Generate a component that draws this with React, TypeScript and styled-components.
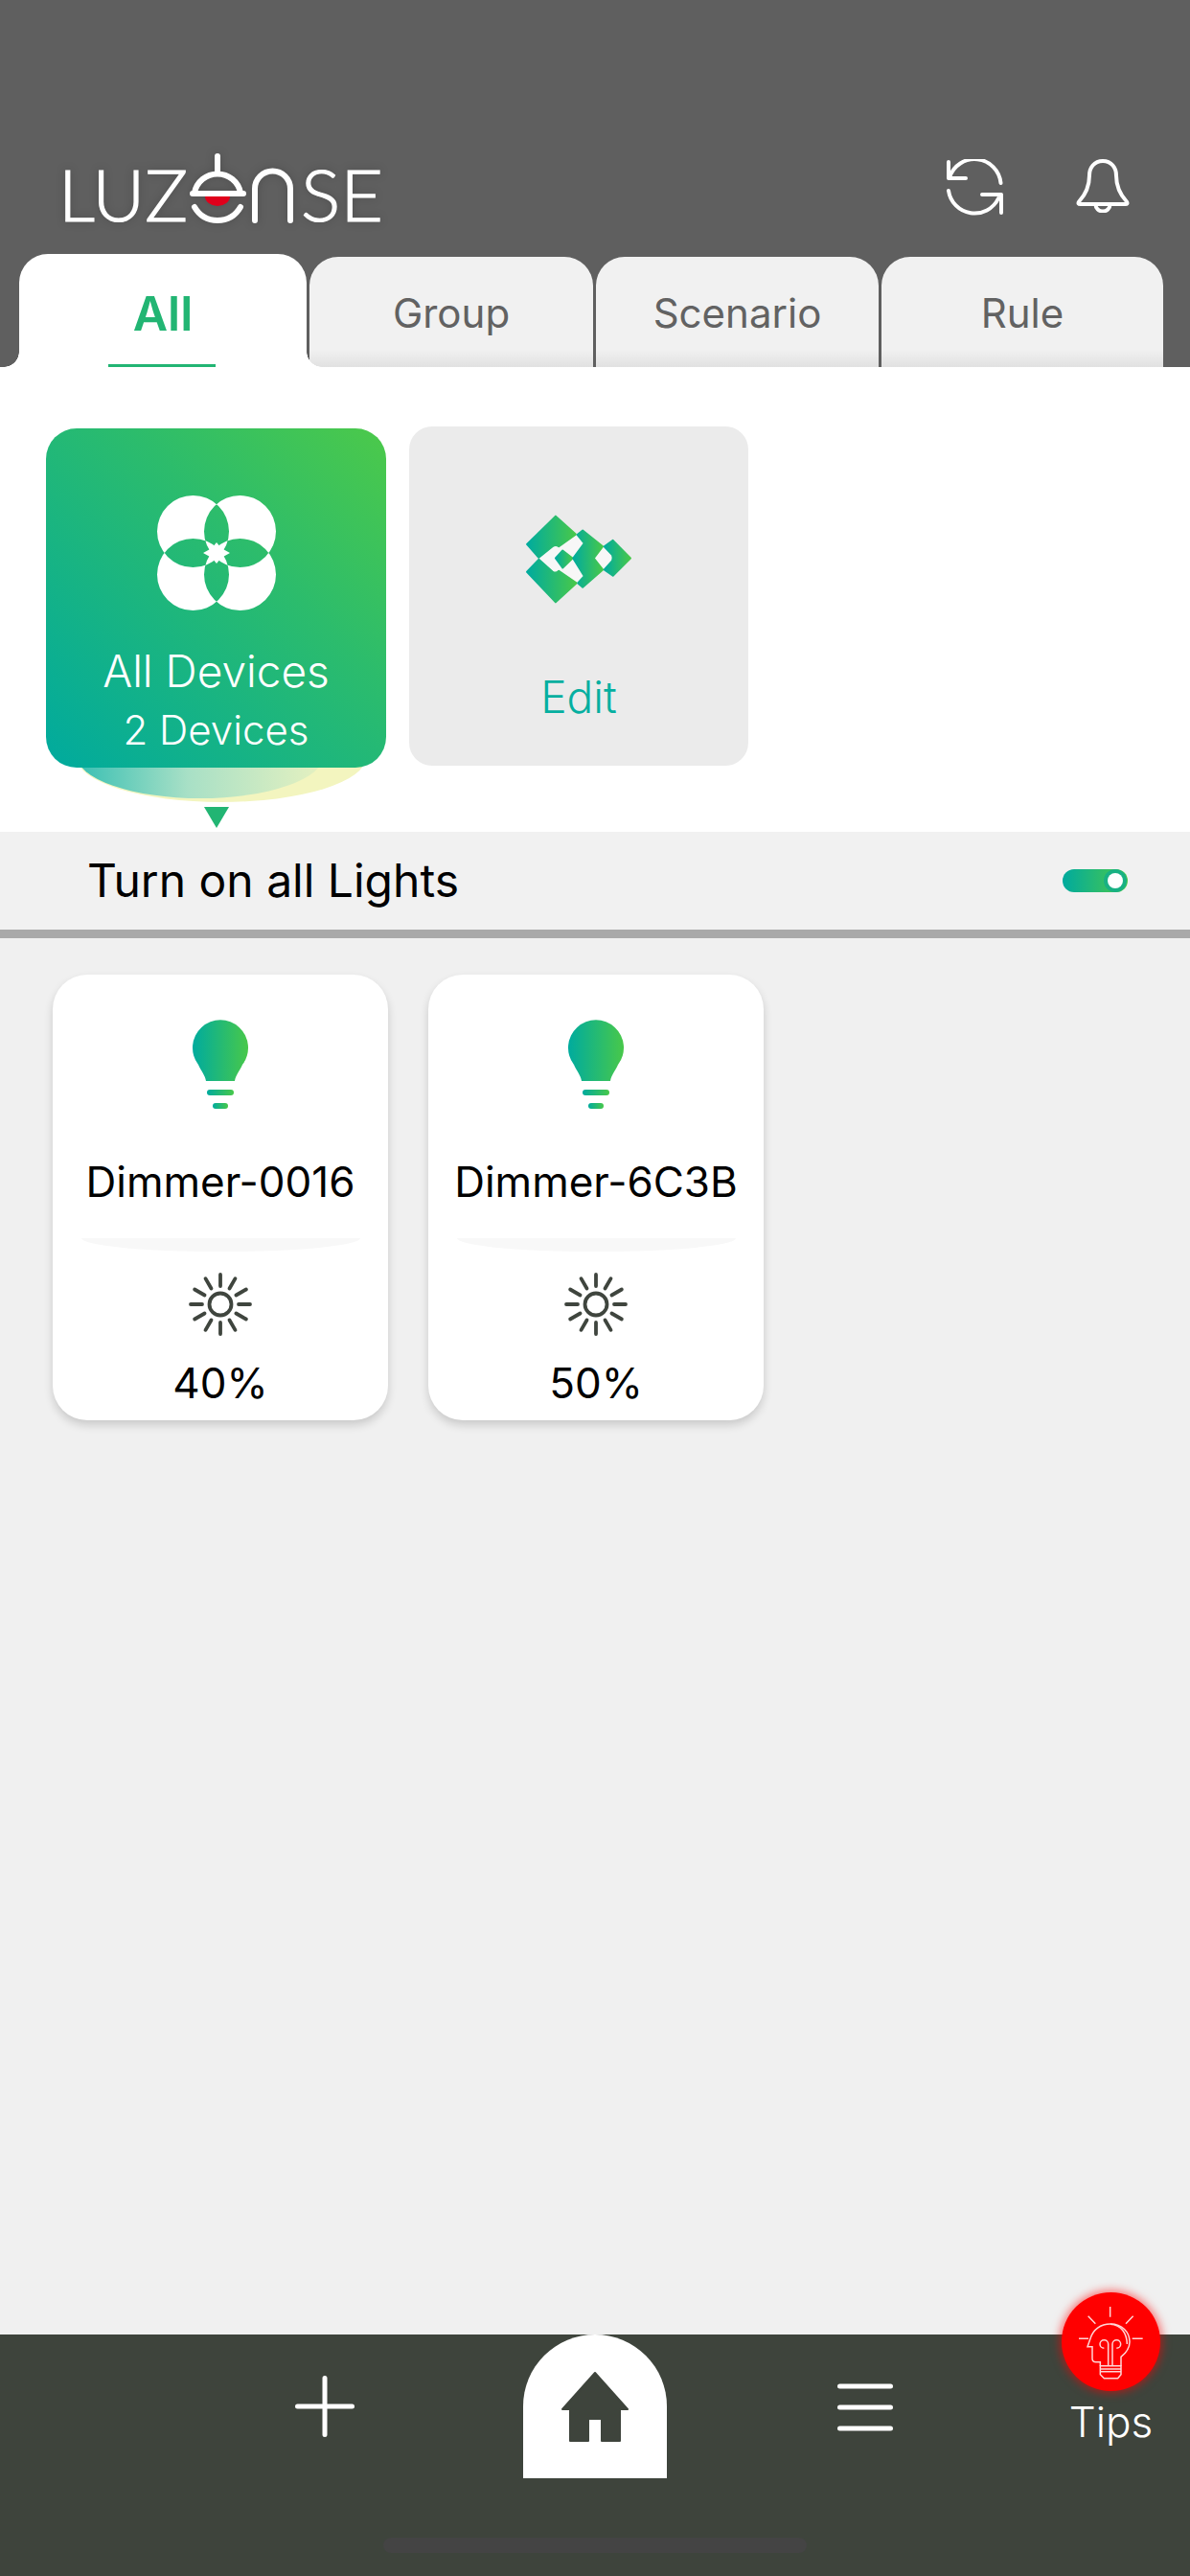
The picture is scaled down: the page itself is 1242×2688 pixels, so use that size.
import React from "react";
import styled, { createGlobalStyle } from "styled-components";

const Global = createGlobalStyle`
  html, body { margin: 0; padding: 0; background: #f0f0f0; }
  body { font-family: Inter, "Noto Sans", "Liberation Sans", sans-serif; }
  * { box-sizing: border-box; }
`;

const Page = styled.div`
  width: 1242px;
  height: 2688px;
  display: flex;
  flex-direction: column;
  background: #f0f0f0;
  overflow: hidden;
`;

const Header = styled.header`
  height: 383px;
  background: #5f5f5f;
  display: flex;
  flex-direction: column;
  justify-content: flex-end;
`;

const TopBar = styled.div`
  display: flex;
  align-items: flex-start;
  justify-content: space-between;
  padding: 0 63px 31px 61px;
`;

const LogoMark = styled.svg`
  display: block;
  width: 340px;
  height: 74px;
  filter: drop-shadow(0 0 5px rgba(0, 0, 0, 0.18));
`;

const LogoText = styled.text`
  font-family: Lato, Inter, sans-serif;
  font-weight: 300;
  font-size: 74px;
  fill: #fff;
  stroke: #fff;
  stroke-width: 1.2px;
`;

const Actions = styled.div`
  display: flex;
  align-items: flex-start;
  gap: 75px;
  margin-top: 6px;
`;

const TabRow = styled.nav`
  display: grid;
  grid-template-columns: 300px 296px 295px 294px;
  column-gap: 3px;
  padding-left: 20px;
  align-items: end;
`;

const Tab = styled.div<{ $active?: boolean }>`
  position: relative;
  height: ${(p) => (p.$active ? 118 : 115)}px;
  border-radius: 30px 30px 0 0;
  padding-top: ${(p) => (p.$active ? 32 : 34)}px;
  text-align: center;
  font-size: ${(p) => (p.$active ? 50 : 42)}px;
  line-height: ${(p) => (p.$active ? 60 : 50)}px;
  font-weight: ${(p) => (p.$active ? 600 : 400)};
  color: ${(p) => (p.$active ? "#22b573" : "#626262")};
  background: ${(p) =>
    p.$active ? "#fff" : "linear-gradient(#f1f1f1 0 84%, #e1e1e1 100%)"};
  ${(p) =>
    p.$active &&
    `
    z-index: 1;
    &::before, &::after {
      content: "";
      position: absolute;
      bottom: 0;
      width: 16px;
      height: 16px;
    }
    &::before {
      left: -16px;
      background: radial-gradient(circle at 0 0, transparent 15.5px, #fff 16px);
    }
    &::after {
      right: -16px;
      background: radial-gradient(circle at 100% 0, transparent 15.5px, #fff 16px);
    }
  `}
`;

const TabUnderline = styled.span`
  position: absolute;
  left: 93px;
  bottom: 0;
  width: 112px;
  height: 3px;
  background: #22b573;
`;

const Panel = styled.section`
  height: 485px;
  background: #fff;
  padding: 64px 0 0 48px;
  display: flex;
  align-items: flex-start;
  gap: 24px;
`;

const TileWrap = styled.div`
  position: relative;
  width: 355px;
  height: 354px;
`;

const GlowBack = styled.div`
  position: absolute;
  left: 32px;
  top: 296px;
  width: 302px;
  height: 94px;
  border-radius: 50%;
  background: #f3f5bf;
  &::before {
    content: "";
    position: absolute;
    left: 0;
    top: 0;
    width: 258px;
    height: 90px;
    border-radius: 50%;
    background: linear-gradient(90deg, #38bfb3 0%, #a8e0c6 45%, #e6f1c0 100%);
  }
`;

const Pointer = styled.div`
  position: absolute;
  left: 165px;
  top: 395px;
  width: 0;
  height: 0;
  border-left: 13px solid transparent;
  border-right: 13px solid transparent;
  border-top: 22px solid #22b573;
`;

const ActiveTile = styled.div`
  position: relative;
  height: 354px;
  border-radius: 32px;
  background: linear-gradient(45deg, #00aa9e 0%, #2cbc6c 62%, #4cc94a 100%);
  color: #fff;
  padding-top: 70px;
  display: flex;
  flex-direction: column;
  align-items: center;
`;

const TileTitle = styled.div`
  margin-top: 33px;
  font-size: 46px;
  line-height: 60px;
  font-weight: 300;
`;

const TileSub = styled.div`
  margin-top: 2px;
  font-size: 42px;
  line-height: 60px;
  font-weight: 300;
`;

const EditTile = styled.div`
  width: 354px;
  height: 354px;
  margin-top: -2px;
  border-radius: 24px;
  background: #ebebeb;
  padding-top: 92px;
  display: flex;
  flex-direction: column;
  align-items: center;
`;

const EditLabel = styled.div`
  margin-top: 67px;
  font-size: 46px;
  line-height: 60px;
  font-weight: 300;
  color: #05afa0;
`;

const LightsRow = styled.div`
  height: 111px;
  background: #f1f1f1;
  border-bottom: 9px solid #a9a9a9;
  padding: 0 65px 0 91px;
  display: flex;
  align-items: center;
  justify-content: space-between;
`;

const LightsLabel = styled.div`
  font-size: 48px;
  line-height: 60px;
  color: #000;
  font-weight: 400;
`;

const Toggle = styled.div`
  width: 68px;
  height: 24px;
  border-radius: 12px;
  background: linear-gradient(90deg, #00aa9e, #4cc94a);
  display: flex;
  align-items: center;
  justify-content: flex-end;
  padding-right: 5px;
`;

const ToggleKnob = styled.div`
  width: 16px;
  height: 16px;
  border-radius: 50%;
  background: #fff;
  box-shadow: 0 0 0 4px #18b183;
`;

const DeviceGrid = styled.div`
  padding: 38px 0 0 55px;
  display: flex;
  gap: 42px;
`;

const DeviceCard = styled.article`
  width: 350px;
  height: 465px;
  border-radius: 36px;
  background: #fff;
  box-shadow: 0 5px 10px rgba(0, 0, 0, 0.16);
  padding-top: 47px;
  display: flex;
  flex-direction: column;
  align-items: center;
`;

const DeviceName = styled.div`
  margin-top: 48px;
  font-size: 44px;
  line-height: 56px;
  color: #000;
  white-space: nowrap;
`;

const DeviceDivider = styled.div`
  margin-top: 31px;
  width: 291px;
  height: 14px;
  background: #f8f8f8;
  border-radius: 0 0 50% 50% / 0 0 100% 100%;
`;

const SunWrap = styled.svg`
  display: block;
  margin-top: 22px;
  flex: none;
`;

const DeviceValue = styled.div`
  margin-top: 21px;
  font-size: 44px;
  line-height: 56px;
  color: #000;
`;

const BottomBar = styled.footer`
  position: relative;
  margin-top: auto;
  height: 252px;
  background: #3e443c;
  display: flex;
  align-items: flex-start;
  padding-left: 308px;
`;

const PlusIcon = styled.svg`
  display: block;
  margin-top: 43px;
  flex: none;
`;

const HomeTab = styled.div`
  margin-left: 176px;
  width: 150px;
  height: 150px;
  border-radius: 75px 75px 0 0;
  background: #fff;
  display: flex;
  justify-content: center;
  padding-top: 39px;
`;

const BurgerIcon = styled.svg`
  display: block;
  margin: 50px 0 0 178px;
  flex: none;
`;

const TipsColumn = styled.div`
  margin: -44px 0 0 176px;
  width: 103px;
  display: flex;
  flex-direction: column;
  align-items: center;
`;

const TipsBubble = styled.div`
  width: 103px;
  height: 103px;
  border-radius: 50%;
  background: #ff0000;
  box-shadow: 0 0 10px 2px rgba(255, 0, 0, 0.55);
  display: flex;
  align-items: center;
  justify-content: center;
`;

const TipsLabel = styled.div`
  margin-top: 4px;
  font-size: 44px;
  line-height: 56px;
  font-weight: 300;
  color: #fff;
`;

const HomeIndicator = styled.div`
  position: absolute;
  left: 400px;
  right: 400px;
  bottom: 24px;
  height: 16px;
  border-radius: 8px;
  background: #444444;
`;

const Defs = () => (
  <svg width="0" height="0" aria-hidden="true" style={{ position: "absolute" }}>
    <defs>
      <linearGradient id="brand" x1="0" y1="0" x2="1" y2="0">
        <stop offset="0" stopColor="#00ab9e" />
        <stop offset="1" stopColor="#48c84a" />
      </linearGradient>
    </defs>
  </svg>
);

const Logo = () => (
  <LogoMark viewBox="0 0 340 74">
    <LogoText x="0" y="71" textLength="135" lengthAdjust="spacingAndGlyphs">
      LUZ
    </LogoText>
    <LogoText x="253" y="71" textLength="86" lengthAdjust="spacingAndGlyphs">
      SE
    </LogoText>
    <g fill="none" stroke="#fff" strokeWidth="6" strokeLinecap="round">
      <path d="M166 3V18" />
      <path d="M142 41A24.500 24.500 0 0 1 190 41" />
      <path d="M140 42H193" />
      <path d="M142 56Q150 70 166 70Q182 70 190 56" />
      <path d="M205 70V37A18.500 18.500 0 0 1 242 37V70" />
    </g>
    <path d="M153 45A13 10 0 0 0 179 45Z" fill="#e0001b" />
  </LogoMark>
);

const RefreshIcon = () => (
  <svg width="60" height="60" viewBox="0 0 60 60" fill="none" stroke="#fff" strokeWidth="4" strokeLinecap="round" strokeLinejoin="round">
    <path d="M2 3V20H20" />
    <path d="M3 19A27.500 27.500 0 0 1 56.500 25" />
    <path d="M2 33A27.500 27.500 0 0 0 54 41" />
    <path d="M37 37H57V56" />
  </svg>
);

const BellIcon = () => (
  <svg width="56" height="56" viewBox="0 0 56 56" fill="none" stroke="#fff" strokeWidth="4" strokeLinejoin="round">
    <path d="M28 2C19 2 14 9 14 17C14 28 11 36 3 44.500Q1.500 47 4.500 47H51.500Q54.500 47 53 44.500C45 36 42 28 42 17C42 9 37 2 28 2Z" />
    <path d="M20.500 47.500A7.500 7 0 0 0 35.500 47.500" />
  </svg>
);

const CloverIcon = () => (
  <svg width="124" height="120" viewBox="164 517 124 120">
    <path
      fillRule="evenodd"
      fill="#fff"
      d="M164 554.500a37.500 37.500 0 1 0 75 0a37.500 37.500 0 1 0 -75 0ZM213 554.500a37.500 37.500 0 1 0 75 0a37.500 37.500 0 1 0 -75 0ZM164 599.500a37.500 37.500 0 1 0 75 0a37.500 37.500 0 1 0 -75 0ZM213 599.500a37.500 37.500 0 1 0 75 0a37.500 37.500 0 1 0 -75 0Z"
    />
    <path d="M226 566L231 572L240 577L231 582L226 588L221 582L212 577L221 572Z" fill="#fff" />
  </svg>
);

const EditIcon = () => (
  <svg width="112" height="93" viewBox="55 35 335 280">
    <g fill="#f7f7f7">
      <path d="M97 172L150 128L165 135L215 97L240 125L205 172L240 225L218 250L165 215L150 222Z" />
      <path d="M270 172L300 135L332 172L300 208Z" />
    </g>
    <g fill="url(#brand)" stroke="url(#brand)" strokeWidth="6" strokeLinejoin="round">
      <path d="M60 128L150 40L213 97L160 135Q150 127 140 135L97 170Z" />
      <path d="M97 176L140 214Q150 222 160 212L215 250L150 310L60 215Z" />
      <path d="M150 172L172 148L203 172L172 202Z" />
      <path d="M235 85L298 135L270 172L298 208L235 263L220 250L240 228L205 172L240 125L218 98Z" />
      <path d="M330 116L385 172L330 227L303 208L328 180Q332 172 328 162L303 135Z" />
    </g>
  </svg>
);

const BulbIcon = () => (
  <svg width="58" height="93" viewBox="0 0 58 93" fill="url(#brand)">
    <path d="M14 64C13 58 9.500 54.500 6 47A29 29 0 1 1 52 47C48.500 54.500 45 58 44 64Z" />
    <rect x="15" y="73" width="28" height="6" rx="3" />
    <rect x="21" y="87" width="16" height="6" rx="3" />
  </svg>
);

const rays = Array.from({ length: 12 }, (_, i) => i * 30);

const SunIcon = () => (
  <SunWrap width="66" height="66" viewBox="-33 -33 66 66" fill="none" stroke="#3f453e" strokeWidth="3.800" strokeLinecap="round">
    <circle r="11.500" />
    {rays.map((a) => (
      <line key={a} x1="0" y1="-19" x2="0" y2="-31" transform={`rotate(${a})`} />
    ))}
  </SunWrap>
);

const Plus = () => (
  <PlusIcon width="62" height="64" viewBox="0 0 62 64" stroke="#fff" strokeWidth="5" strokeLinecap="round">
    <path d="M31 2.500V61.500M2.500 32H59.500" />
  </PlusIcon>
);

const HomeGlyph = () => (
  <svg width="70" height="74" viewBox="-1 -1 70 74" fill="#3e443c" stroke="#3e443c" strokeWidth="2" strokeLinejoin="round">
    <path d="M34 0L68 38H60V71H41V48H27V71H8V38H0Z" />
  </svg>
);

const Burger = () => (
  <BurgerIcon width="58" height="54" viewBox="0 0 58 54" stroke="#fff" strokeWidth="5" strokeLinecap="round">
    <path d="M2.500 4H55.500M2.500 26H55.500M2.500 48H55.500" />
  </BurgerIcon>
);

const TipsIcon = () => (
  <svg width="90" height="95" viewBox="0 0 270 285" fill="none" stroke="#ffd6d6" strokeWidth="4.500">
    <path d="M131 33V65M62 62L85 86M203 62L180 86M33 133H63M200 133H233" />
    <path d="M100 218V206H86Q75 206 75 195V158H60L70 130C78 105 100 87 132 87C168 87 192 112 192 143C192 165 180 178 165 190V218" />
    <path d="M132 88C165 90 183 115 184 150" />
    <path d="M100 218H165V245L155 257H112L100 245ZM100 228H165M100 236H165" />
    <path d="M125 218V150A13 13 0 1 0 112 163M138 218V150A13 13 0 1 1 151 163" />
  </svg>
);

const devices = [
  { name: "Dimmer-0016", value: "40%" },
  { name: "Dimmer-6C3B", value: "50%" },
];

export default function App() {
  return (
    <Page>
      <Global />
      <Defs />
      <Header>
        <TopBar>
          <Logo />
          <Actions>
            <RefreshIcon />
            <BellIcon />
          </Actions>
        </TopBar>
        <TabRow>
          <Tab $active>
            All
            <TabUnderline />
          </Tab>
          <Tab>Group</Tab>
          <Tab>Scenario</Tab>
          <Tab>Rule</Tab>
        </TabRow>
      </Header>
      <Panel>
        <TileWrap>
          <GlowBack />
          <Pointer />
          <ActiveTile>
            <CloverIcon />
            <TileTitle>All Devices</TileTitle>
            <TileSub>2 Devices</TileSub>
          </ActiveTile>
        </TileWrap>
        <EditTile>
          <EditIcon />
          <EditLabel>Edit</EditLabel>
        </EditTile>
      </Panel>
      <LightsRow>
        <LightsLabel>Turn on all Lights</LightsLabel>
        <Toggle>
          <ToggleKnob />
        </Toggle>
      </LightsRow>
      <DeviceGrid>
        {devices.map((d) => (
          <DeviceCard key={d.name}>
            <BulbIcon />
            <DeviceName>{d.name}</DeviceName>
            <DeviceDivider />
            <SunIcon />
            <DeviceValue>{d.value}</DeviceValue>
          </DeviceCard>
        ))}
      </DeviceGrid>
      <BottomBar>
        <Plus />
        <HomeTab>
          <HomeGlyph />
        </HomeTab>
        <Burger />
        <TipsColumn>
          <TipsBubble>
            <TipsIcon />
          </TipsBubble>
          <TipsLabel>Tips</TipsLabel>
        </TipsColumn>
        <HomeIndicator />
      </BottomBar>
    </Page>
  );
}
